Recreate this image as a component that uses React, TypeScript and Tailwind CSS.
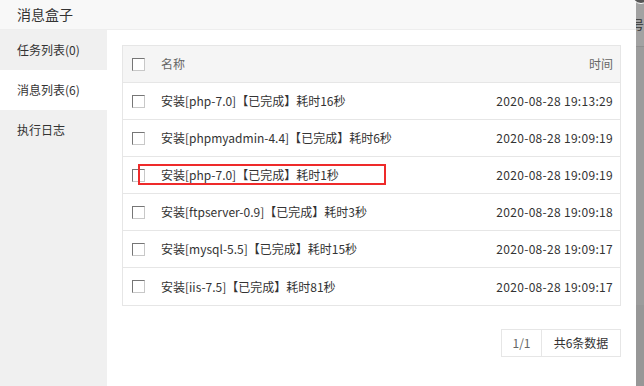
import React from 'react';

const rows = [
  { name: '安装[php-7.0]【已完成】耗时16秒', time: '2020-08-28 19:13:29' },
  { name: '安装[phpmyadmin-4.4]【已完成】耗时6秒', time: '2020-08-28 19:09:19' },
  { name: '安装[php-7.0]【已完成】耗时1秒', time: '2020-08-28 19:09:19', marked: true },
  { name: '安装[ftpserver-0.9]【已完成】耗时3秒', time: '2020-08-28 19:09:18' },
  { name: '安装[mysql-5.5]【已完成】耗时15秒', time: '2020-08-28 19:09:17' },
  { name: '安装[iis-7.5]【已完成】耗时81秒', time: '2020-08-28 19:09:17' },
];

const tabs = [
  { id: 'task', label: '任务列表(0)' },
  { id: 'msg', label: '消息列表(6)' },
  { id: 'log', label: '执行日志' },
];

const Checkbox = () => (
  <span className="inline-block w-[13px] h-[13px] border border-[#767676] border-r-[#c8c8c8] border-b-[#c8c8c8] bg-white shrink-0" />
);

export default function App() {
  const activeTab = 'msg';

  return (
    <div
      className="relative w-[644px] h-[386px] flex overflow-hidden bg-[#9c9c9c] text-[12px] text-[#333]"
      style={{ fontFamily: '"Noto Sans CJK SC", "Microsoft YaHei", "Liberation Sans", sans-serif' }}
    >
      <div className="w-[636px] h-full flex flex-col bg-white">
        <div className="h-[30px] shrink-0 flex items-center pl-[17px] bg-[#f8f8f8] border-b border-[#eee] text-[14px] text-[#333]">
          消息盒子
        </div>

        <div className="flex flex-1 min-h-0">
          <div className="w-[107px] shrink-0 bg-[#f0f0f0] flex flex-col">
            {tabs.map((tab) => (
              <div
                key={tab.id}
                className={`h-[40px] flex items-center pl-[17px] ${activeTab === tab.id ? 'bg-white' : ''}`}
              >
                {tab.label}
              </div>
            ))}
          </div>

          <div className="flex-1 pl-[15px] pr-[15px] pt-[15px]">
            <div className="border border-[#e6e6e6]">
              <div className="h-[37px] flex items-center bg-[#f5f5f5] border-b border-[#e6e6e6] pl-[9px] pr-[7px] text-[#666]">
                <Checkbox />
                <span className="ml-[16px]">名称</span>
                <span className="ml-auto">时间</span>
              </div>
              {rows.map((row, i) => (
                <div
                  key={i}
                  className={`relative h-[37px] flex items-center pl-[9px] pr-[7px] ${i < rows.length - 1 ? 'border-b border-[#e6e6e6]' : ''}`}
                >
                  <Checkbox />
                  <span className="ml-[16px]">{row.name}</span>
                  <span className="ml-auto tracking-[0.3px]">{row.time}</span>
                  {row.marked && (
                    <div className="absolute left-[15px] top-[7px] w-[248px] h-[21px] border-2 border-[#ee2a2a]" />
                  )}
                </div>
              ))}
            </div>

            <div className="flex justify-end mt-[23px]">
              <div className="flex h-[28px] border border-[#e6e6e6]">
                <div className="w-[40px] flex items-center justify-center text-[#666] border-r border-[#e6e6e6]">1/1</div>
                <div className="w-[78px] flex items-center justify-center text-[#333]">共6条数据</div>
              </div>
            </div>
          </div>
        </div>
      </div>

      <div className="flex-1 h-full flex flex-col">
        <div className="h-[47px] bg-[#a2a2a2] border-b border-[#8f8f8f] flex items-end pb-[12px] text-[#333] overflow-hidden">
          <span className="-ml-[4px]">号</span>
        </div>
        <div className="h-[258px] bg-[#9c9c9c]" />
        <div className="flex-1 bg-[#979797]" />
      </div>

      <div className="absolute right-[-6px] top-[-14px] w-[18px] h-[18px] rounded-full bg-[#555] border border-white" />
    </div>
  );
}
